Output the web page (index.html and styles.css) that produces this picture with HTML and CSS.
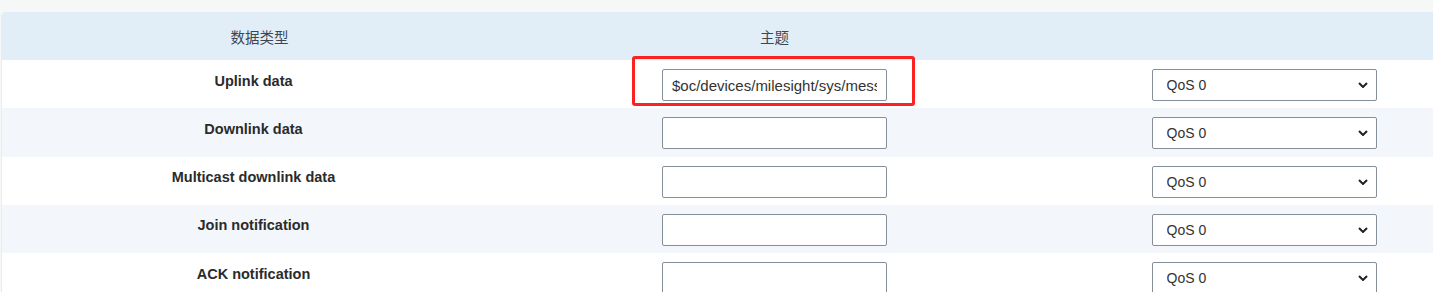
FILE: index.html
```html
<!DOCTYPE html>
<html lang="zh-CN">
<head>
    <meta charset="UTF-8">
    <title>MQTT 主题</title>
    <link rel="stylesheet" href="styles.css">
</head>
<body>
    <div class="topic-table">
        <div class="row head">
            <div class="cell">数据类型</div>
            <div class="cell">主题</div>
            <div class="cell"></div>
        </div>

        <div class="row">
            <div class="cell label">Uplink data</div>
            <div class="cell">
                <div class="marked">
                    <input type="text" class="topic" value="$oc/devices/milesight/sys/messages/up">
                    <span class="mark"></span>
                </div>
            </div>
            <div class="cell">
                <div class="select-wrap">
                    <select class="qos"><option>QoS 0</option><option>QoS 1</option><option>QoS 2</option></select>
                    <svg class="chevron" width="10" height="6" viewBox="0 0 10 6"><path d="M1 1l4 4 4-4" fill="none" stroke="#222" stroke-width="2"/></svg>
                </div>
            </div>
        </div>

        <div class="row alt">
            <div class="cell label">Downlink data</div>
            <div class="cell"><input type="text" class="topic"></div>
            <div class="cell">
                <div class="select-wrap">
                    <select class="qos"><option>QoS 0</option><option>QoS 1</option><option>QoS 2</option></select>
                    <svg class="chevron" width="10" height="6" viewBox="0 0 10 6"><path d="M1 1l4 4 4-4" fill="none" stroke="#222" stroke-width="2"/></svg>
                </div>
            </div>
        </div>

        <div class="row">
            <div class="cell label">Multicast downlink data</div>
            <div class="cell"><input type="text" class="topic"></div>
            <div class="cell">
                <div class="select-wrap">
                    <select class="qos"><option>QoS 0</option><option>QoS 1</option><option>QoS 2</option></select>
                    <svg class="chevron" width="10" height="6" viewBox="0 0 10 6"><path d="M1 1l4 4 4-4" fill="none" stroke="#222" stroke-width="2"/></svg>
                </div>
            </div>
        </div>

        <div class="row alt">
            <div class="cell label">Join notification</div>
            <div class="cell"><input type="text" class="topic"></div>
            <div class="cell">
                <div class="select-wrap">
                    <select class="qos"><option>QoS 0</option><option>QoS 1</option><option>QoS 2</option></select>
                    <svg class="chevron" width="10" height="6" viewBox="0 0 10 6"><path d="M1 1l4 4 4-4" fill="none" stroke="#222" stroke-width="2"/></svg>
                </div>
            </div>
        </div>

        <div class="row">
            <div class="cell label">ACK notification</div>
            <div class="cell"><input type="text" class="topic"></div>
            <div class="cell">
                <div class="select-wrap">
                    <select class="qos"><option>QoS 0</option><option>QoS 1</option><option>QoS 2</option></select>
                    <svg class="chevron" width="10" height="6" viewBox="0 0 10 6"><path d="M1 1l4 4 4-4" fill="none" stroke="#222" stroke-width="2"/></svg>
                </div>
            </div>
        </div>
    </div>
</body>
</html>
```

FILE: styles.css
```css
body {
    margin: 0;
    padding: 12px 0 0 1px;
    background: #f6f7f7;
    font-family: "Liberation Sans", Arial, "Noto Sans CJK SC", sans-serif;
    color: #333;
    overflow: hidden;
}
.topic-table {
    width: 1494px;
    background: #fff;
    border-left: 1px solid #e9edf0;
    border-radius: 4px 0 0 0;
    overflow: hidden;
}
.row {
    display: grid;
    grid-template-columns: 515px 515px 464px;
    height: 48.25px;
}
.row.alt {
    background: #f3f7fb;
}
.row.head {
    height: 48px;
    background: #e1eef8;
    font-family: "Noto Sans CJK SC", "Liberation Sans", sans-serif;
    font-size: 14.5px;
    color: #3d4753;
}
.cell {
    display: flex;
    align-items: center;
    justify-content: center;
}
.cell.label {
    font-weight: bold;
    font-size: 14.5px;
    color: #2b2b2b;
    padding: 0 12px 7px 0;
}
.topic,
.qos {
    box-sizing: border-box;
    width: 225px;
    height: 32px;
    margin-top: 2px;
    border: 1px solid #858f99;
    border-radius: 2px;
    background: #fff;
    font-family: "Liberation Sans", Arial, sans-serif;
    font-size: 14px;
    color: #333;
}
.topic {
    padding: 0 9px;
    font-size: 15px;
}
.marked {
    position: relative;
}
.mark {
    position: absolute;
    left: -30px;
    top: -11px;
    width: 283px;
    height: 50px;
    box-sizing: border-box;
    border: 3px solid #fb2222;
    border-radius: 3px;
}
.select-wrap {
    position: relative;
}
.qos {
    -webkit-appearance: none;
    appearance: none;
    padding: 0 30px 0 14px;
}
.chevron {
    position: absolute;
    right: 9px;
    top: 15px;
    pointer-events: none;
}
```
